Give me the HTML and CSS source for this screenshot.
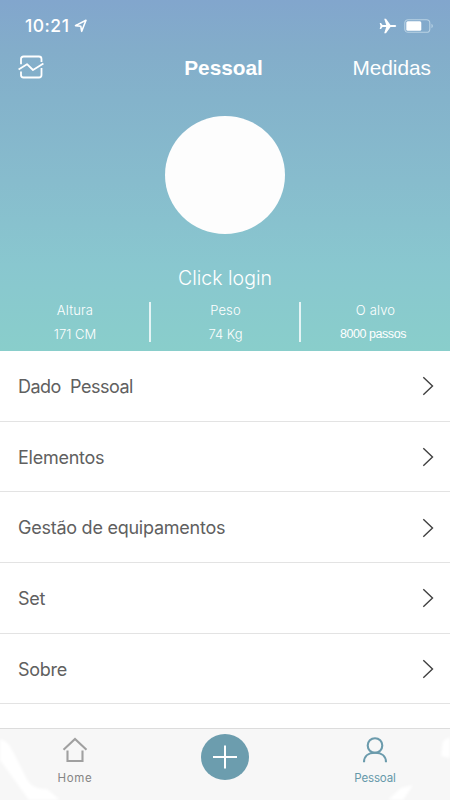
FILE: index.html
```html
<!DOCTYPE html>
<html lang="pt">
<head>
<meta charset="utf-8">
<title>Pessoal</title>
<link rel="stylesheet" href="styles.css">
</head>
<body>
<div class="app">
  <header class="hero">
    <div class="status">
      <span class="time">10:21</span>
      <svg class="location" width="14" height="14" viewBox="0 0 14 14"><path d="M1.500 6.600 12 1.300 7.700 12.300 6.800 7.300Z"/></svg>
      <svg class="plane" width="18" height="16" viewBox="0 0 18 16"><path d="M17.200 8c0-.8-.8-1.100-1.700-1.100h-4L7 .7H5.200l2 6.200H3.500L2 4.900H.7L1.500 8 .7 11.100H2l1.500-2h3.700l-2 6.200H7l4.500-6.200h4c.9 0 1.700-.3 1.700-1.100Z"/></svg>
      <svg class="battery" width="30" height="14" viewBox="0 0 30 14"><rect class="shell" x=".8" y=".7" width="25" height="12.6" rx="3.4"/><rect x="2.3" y="2.3" width="15" height="9.4" rx="1.5" fill="#fff"/><path class="tip" d="M27.500 4.800c1.800.7 1.800 3.700 0 4.400Z"/></svg>
    </div>
    <nav class="nav">
      <svg class="chart" width="26" height="24" viewBox="0 0 26 24"><path d="M3 9.300V4Q3 1.500 5.500 1.500H21Q23.500 1.500 23.500 4V7M.6 14.500 9 9.200 15 15 25.400 8.500M3 16.500V20Q3 22.500 5.500 22.500H21Q23.500 22.500 23.500 20V13"/></svg>
      <h1>Pessoal</h1>
      <span class="measures">Medidas</span>
    </nav>
    <div class="avatar"></div>
    <div class="login"><span>Click login</span></div>
    <div class="stats">
      <div class="stat"><span class="label">Altura</span><span>171 CM</span></div>
      <div class="stat"><span class="label">Peso</span><span>74 Kg</span></div>
      <div class="stat"><span class="label">O alvo</span><span class="goal">8000 passos</span></div>
    </div>
  </header>
  <main class="list">
    <div class="row"><span class="profile">Dado&nbsp; Pessoal</span><svg width="12" height="20" viewBox="0 0 12 20"><path d="M1.300 1.300 10.500 10 1.300 18.700"/></svg></div>
    <div class="row"><span>Elementos</span><svg width="12" height="20" viewBox="0 0 12 20"><path d="M1.300 1.300 10.500 10 1.300 18.700"/></svg></div>
    <div class="row"><span>Gestão de equipamentos</span><svg width="12" height="20" viewBox="0 0 12 20"><path d="M1.300 1.300 10.500 10 1.300 18.700"/></svg></div>
    <div class="row"><span>Set</span><svg width="12" height="20" viewBox="0 0 12 20"><path d="M1.300 1.300 10.500 10 1.300 18.700"/></svg></div>
    <div class="row"><span>Sobre</span><svg width="12" height="20" viewBox="0 0 12 20"><path d="M1.300 1.300 10.500 10 1.300 18.700"/></svg></div>
  </main>
  <footer class="tabs">
    <svg class="wash" width="450" height="72" viewBox="0 0 450 72"><path d="M0 11Q8 13 12 22L28 53Q34 62 47 61L60 72H29L0 32ZM443 13 450 9V30L441 28ZM401 60 413 57 403 72H388Z"/></svg>
    <div class="tab">
      <svg width="26" height="26" viewBox="0 0 26 26"><path d="M1.500 12.700 13 2 24.500 12.700M5.500 13.500V24H20.500V13.500"/></svg>
      <span class="home">Home</span>
    </div>
    <div class="tab"><div class="add"><svg width="24" height="24" viewBox="0 0 24 24"><path d="M0 12H24M12 .5V23.500"/></svg></div></div>
    <div class="tab active">
      <svg width="26" height="26" viewBox="0 0 26 26"><circle cx="13" cy="8.5" r="7.3"/><path d="M2 25.300C2 18.500 7 15.800 13 15.800S24 18.500 24 25.300"/></svg>
      <span class="me">Pessoal</span>
    </div>
  </footer>
</div>
</body>
</html>
```

FILE: styles.css
```css
* { box-sizing: border-box; }
body { margin: 0; font-family: Inter, "Liberation Sans", sans-serif; }
.app { width: 450px; height: 800px; display: flex; flex-direction: column; overflow: hidden; background: #fff; }
svg { display: block; fill: none; flex: none; }
span, h1 { white-space: nowrap; }

.hero { height: 351px; color: #fff; background: linear-gradient(#82a6cd 0, #83adca 50px, #84b3cb 100px, #87bccd 180px, #89c7cf 265px, #89cecb 351px); }
.status { height: 47px; padding: 5px 16px 0 25px; display: flex; align-items: center; }
.time { font-size: 17.500px; line-height: 20px; font-weight: 500; letter-spacing: .5px; }
.location { margin-left: 5px; stroke: #fff; stroke-width: 1.600; stroke-linejoin: round; }
.plane { margin-left: auto; fill: #fff; }
.battery { margin-left: 7px; }
.shell { stroke: #b9d2e4; stroke-width: 1.100; }
.tip { fill: #b9d2e4; }
.nav { height: 41px; padding: 0 19px 0 18px; display: grid; grid-template-columns: 1fr auto 1fr; align-items: center; }
.chart { margin-top: -1px; stroke: #fff; stroke-width: 1.800; stroke-linejoin: round; }
.nav h1 { margin: 0 2px 0 0; font: bold 20.800px/26px "Liberation Sans", sans-serif; }
.measures { justify-self: end; font: 20.800px/26px "Liberation Sans", sans-serif; }
.avatar { width: 120px; height: 118px; margin: 28px auto 0; border-radius: 50%; background: #fdfdfd; }
.login { height: 68px; padding-top: 31px; text-align: center; font-size: 19.500px; line-height: 26px; font-weight: 300; }
.stats { display: grid; grid-template-columns: repeat(3, 1fr); height: 40px; }
.stat { display: flex; flex-direction: column; align-items: center; justify-content: space-between; font-size: 13px; line-height: 16px; font-weight: 300; }
.stat + .stat { border-left: 2px solid #e4f4f5; margin-left: -1px; }
.label { letter-spacing: .15px; }
.goal { margin-right: 5px; font: 12.500px/16px "Liberation Sans", sans-serif; letter-spacing: -.45px; }

.list { flex: none; height: 377px; }
.row { height: 70.700px; padding: 1px 16px 0 18px; display: flex; align-items: center; justify-content: space-between; border-bottom: 1px solid #e3e3e3; color: #606060; font-size: 18px; line-height: 24px; font-weight: 400; letter-spacing: -.25px; }
.row span { padding-top: 1px; }
.profile { letter-spacing: -.5px; }
.row svg { stroke: #404040; stroke-width: 1.400; }

.tabs { position: relative; height: 72px; display: grid; grid-template-columns: repeat(3, 150px); background: #f7f7f7; border-top: 1px solid #dcdcdc; }
.wash { position: absolute; top: -1px; left: 0; fill: #fff; filter: blur(1.500px); }
.tab { position: relative; display: flex; flex-direction: column; align-items: center; padding-top: 8px; color: #858585; font-size: 11.500px; line-height: 16px; }
.tab > svg { stroke: #a0a0a0; stroke-width: 2.100; }
.tab > span { margin-top: 7px; }
.home { letter-spacing: .7px; }
.me { letter-spacing: -.15px; }
.tab.active { color: #6599aa; }
.tab.active > svg { stroke: #6b9bac; }
.add { width: 48px; height: 46px; margin-top: -3px; border-radius: 50%; background: #6c9dae; display: grid; place-items: center; }
.add svg { stroke: #fff; stroke-width: 2; }
```
